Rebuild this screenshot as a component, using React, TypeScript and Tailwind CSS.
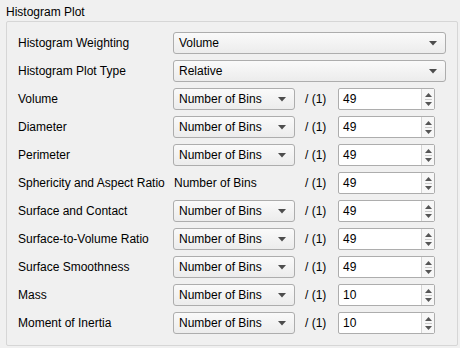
import React from "react";

const rows: { label: string; value: string; combo: boolean }[] = [
  { label: "Volume", value: "49", combo: true },
  { label: "Diameter", value: "49", combo: true },
  { label: "Perimeter", value: "49", combo: true },
  { label: "Sphericity and Aspect Ratio", value: "49", combo: false },
  { label: "Surface and Contact", value: "49", combo: true },
  { label: "Surface-to-Volume Ratio", value: "49", combo: true },
  { label: "Surface Smoothness", value: "49", combo: true },
  { label: "Mass", value: "10", combo: true },
  { label: "Moment of Inertia", value: "10", combo: true },
];

function Arrow() {
  return (
    <svg width="8" height="5" viewBox="0 0 8 5" className="shrink-0">
      <path d="M0 0 H8 L4 4.5 Z" fill="#4d4d4d" />
    </svg>
  );
}

function Combo({ text, wide }: { text: string; wide?: boolean }) {
  return (
    <div
      className={`h-[22px] ${wide ? "w-[273px]" : "w-[122px]"} flex items-center justify-between pl-[5px] pr-[8px] border border-[#adadad] rounded-[3px] bg-gradient-to-b from-[#fafafa] to-[#ececec]`}
    >
      <span>{text}</span>
      <Arrow />
    </div>
  );
}

function SpinBox({ value }: { value: string }) {
  return (
    <div className="h-[22px] w-[97px] flex border border-[#adadad] rounded-[2px] bg-white">
      <div className="flex-1 flex items-center pl-[4px]">{value}</div>
      <div className="w-[13px] border-l border-[#d4d4d4] flex flex-col items-center justify-center gap-[2px] bg-[#f7f7f7]">
        <svg width="7" height="4" viewBox="0 0 7 4">
          <path d="M0 4 H7 L3.5 0 Z" fill="#555" />
        </svg>
        <div className="w-[7px] h-px bg-[#c8c8c8]" />
        <svg width="7" height="4" viewBox="0 0 7 4">
          <path d="M0 0 H7 L3.5 4 Z" fill="#555" />
        </svg>
      </div>
    </div>
  );
}

export default function App() {
  return (
    <div
      className="w-[460px] h-[348px] bg-[#f0f0f0] text-black text-[12px] pt-[5px]"
      style={{ fontFamily: '"Liberation Sans", Arial, sans-serif' }}
    >
      <div className="pl-[6px] leading-[14px]">Histogram Plot</div>
      <div className="ml-[6px] mt-[2px] w-[452px] h-[325px] border border-[#d6d6d6] rounded-[2px] pl-[11px] pt-[10px] flex flex-col gap-[6px]">
        <div className="flex items-center">
          <div className="w-[155px]">Histogram Weighting</div>
          <Combo text="Volume" wide />
        </div>
        <div className="flex items-center">
          <div className="w-[155px]">Histogram Plot Type</div>
          <Combo text="Relative" wide />
        </div>
        {rows.map((r) => (
          <div key={r.label} className="flex items-center">
            <div className="w-[155px] whitespace-nowrap">{r.label}</div>
            {r.combo ? (
              <Combo text="Number of Bins" />
            ) : (
              <div className="w-[122px] pl-[1px]">Number of Bins</div>
            )}
            <div className="ml-[10px] w-[33px]">/ (1)</div>
            <SpinBox value={r.value} />
          </div>
        ))}
      </div>
    </div>
  );
}
